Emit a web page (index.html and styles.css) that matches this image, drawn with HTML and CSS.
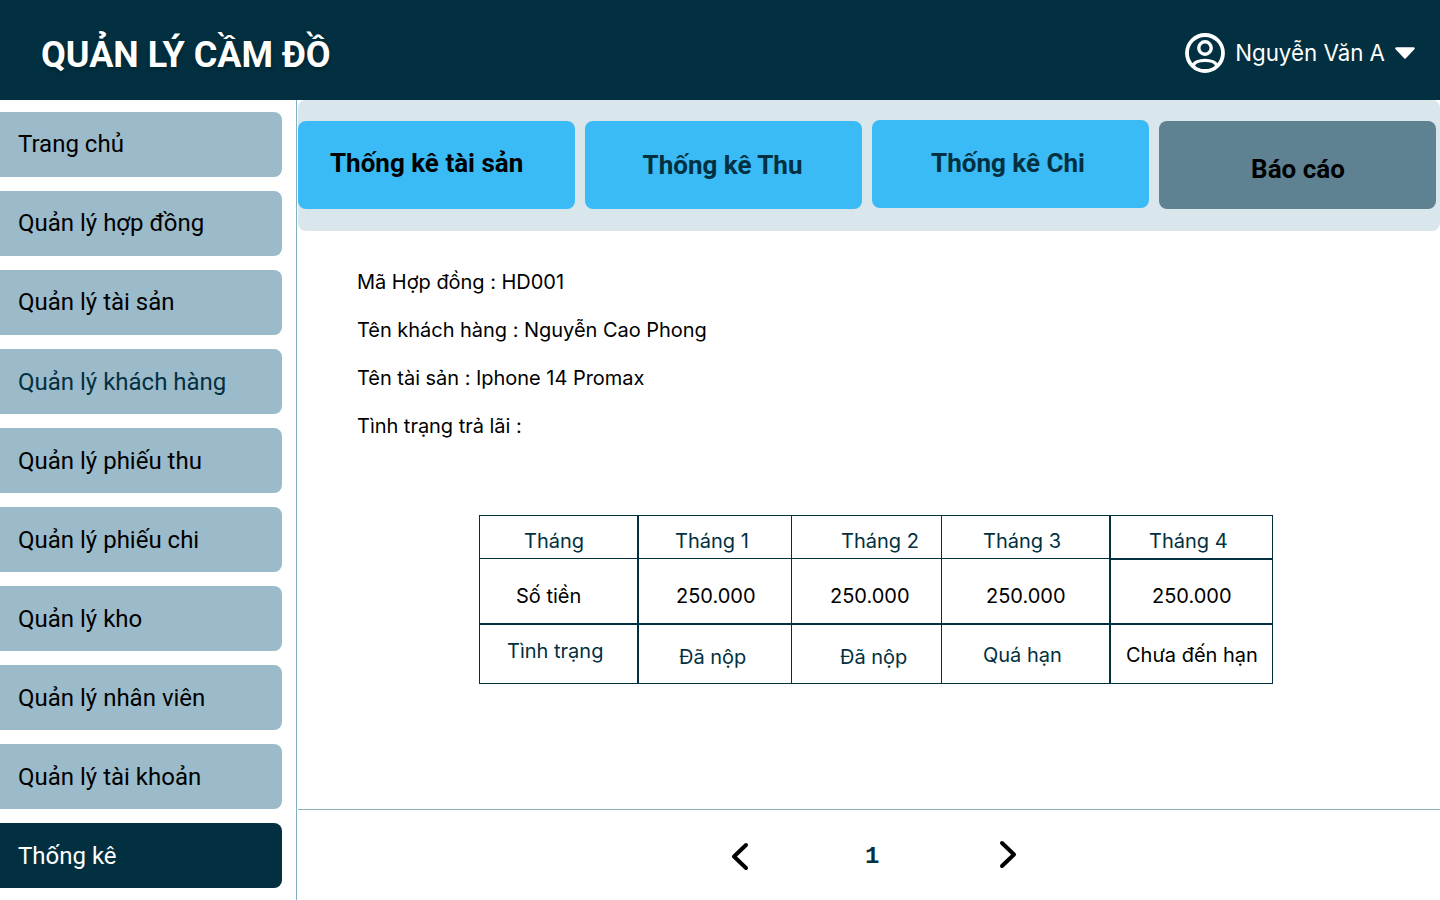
FILE: index.html
```html
<!DOCTYPE html>
<html lang="vi">
<head>
    <meta charset="UTF-8">
    <meta name="viewport" content="width=device-width, initial-scale=1.0">
    <title>Quản lý cầm đồ</title>
    <link rel="stylesheet" href="styles.css">
</head>
<body>

<header class="topbar">
    <h1 class="brand">QUẢN LÝ CẦM ĐỒ</h1>
    <div class="user">
        <svg class="user-icon" width="40" height="40" viewBox="0 0 40 40" fill="none" stroke="#fff">
            <circle cx="20" cy="20" r="18" stroke-width="3.8"/>
            <circle cx="20" cy="15" r="6.2" stroke-width="3.4"/>
            <path d="M8 33C10 25.500 30 25.500 32 33" stroke-width="3.4"/>
        </svg>
        <span class="user-name">Nguyễn Văn A</span>
        <svg class="user-caret" width="20" height="12" viewBox="0 0 20 12">
            <path d="M1.500 1.500H18.500L10 10.500Z" fill="#fff" stroke="#fff" stroke-width="2.500" stroke-linejoin="round"/>
        </svg>
    </div>
</header>

<div class="layout">
    <nav class="sidebar">
        <a class="nav-item nav-up">Trang chủ</a>
        <a class="nav-item nav-up">Quản lý hợp đồng</a>
        <a class="nav-item nav-up">Quản lý tài sản</a>
        <a class="nav-item nav-teal">Quản lý khách hàng</a>
        <a class="nav-item">Quản lý phiếu thu</a>
        <a class="nav-item">Quản lý phiếu chi</a>
        <a class="nav-item">Quản lý kho</a>
        <a class="nav-item">Quản lý nhân viên</a>
        <a class="nav-item">Quản lý tài khoản</a>
        <a class="nav-item nav-active">Thống kê</a>
    </nav>

    <main class="content">
        <div class="tabs">
            <button class="tab tab-assets">Thống kê tài sản</button>
            <button class="tab tab-income">Thống kê Thu</button>
            <button class="tab tab-spend">Thống kê Chi</button>
            <button class="tab tab-report">Báo cáo</button>
        </div>

        <section class="details">
            <p>Mã Hợp đồng : HD001</p>
            <p>Tên khách hàng : Nguyễn Cao Phong</p>
            <p>Tên tài sản : Iphone 14 Promax</p>
            <p>Tình trạng trả lãi :</p>
        </section>

        <table class="report">
            <colgroup>
                <col class="col-a"><col class="col-b"><col class="col-c"><col class="col-d"><col class="col-e">
            </colgroup>
            <tr class="row-month">
                <td class="thick-r teal pl44">Tháng</td>
                <td class="teal pl36">Tháng 1</td>
                <td class="teal pl49">Tháng 2</td>
                <td class="thick-r teal pl41">Tháng 3</td>
                <td class="teal pl38">Tháng 4</td>
            </tr>
            <tr class="row-money">
                <td class="thick-r thick-b pl36">Số tiền</td>
                <td class="thick-b pl37">250.000</td>
                <td class="thick-b pl38">250.000</td>
                <td class="thick-r thick-b pl44">250.000</td>
                <td class="thick-b thick-t pl41">250.000</td>
            </tr>
            <tr class="row-status">
                <td class="thick-r teal pl27 pt14">Tình trạng</td>
                <td class="teal pl40 pt20">Đã nộp</td>
                <td class="teal pl48 pt20">Đã nộp</td>
                <td class="thick-r teal pl41 pt18">Quá hạn</td>
                <td class="pl15 pt18">Chưa đến hạn</td>
            </tr>
        </table>

        <footer class="pager">
            <svg class="pager-prev" width="20" height="30" viewBox="0 0 20 30" fill="none" stroke="#000" stroke-width="4" stroke-linecap="round" stroke-linejoin="round">
                <path d="M16 3L4 14.500L16 26"/>
            </svg>
            <span class="pager-num">1</span>
            <svg class="pager-next" width="20" height="30" viewBox="0 0 20 30" fill="none" stroke="#000" stroke-width="4" stroke-linecap="round" stroke-linejoin="round">
                <path d="M4 3L16 14.500L4 26"/>
            </svg>
        </footer>
    </main>
</div>

</body>
</html>
```

FILE: styles.css
```css
* {
    box-sizing: border-box;
}
body {
    margin: 0;
    height: 900px;
    overflow: hidden;
    background: #fff;
    color: #000;
    font-family: "Inter", "Liberation Sans", sans-serif;
}
.topbar {
    height: 100px;
    padding: 0 25px 0 41px;
    background: #023040;
    display: flex;
    align-items: center;
    justify-content: space-between;
}
.brand {
    margin: 0 0 -10px;
    font-family: "Roboto", sans-serif;
    font-size: 36px;
    font-weight: 700;
    color: #fff;
    text-shadow: 0 2px 4px rgba(0, 0, 0, 0.3);
}
.user {
    margin-top: 6px;
    display: flex;
    align-items: center;
    color: #fff;
    font-size: 22.3px;
}
.user-name {
    margin: -2px 10px 0;
}
.layout {
    display: flex;
    height: 800px;
}
.sidebar {
    width: 297px;
    flex: none;
    padding: 12px 14px 0 0;
    border-right: 1px solid #7fb0c4;
    display: flex;
    flex-direction: column;
    gap: 14px;
}
.nav-item {
    height: 65px;
    flex: none;
    padding-left: 18px;
    background: #9bbbcb;
    border-radius: 0 8px 8px 0;
    display: flex;
    align-items: center;
    font-family: "Roboto", sans-serif;
    font-size: 24px;
    color: #000;
}
.nav-up {
    padding-bottom: 2px;
}
.nav-teal {
    color: #023040;
}
.nav-active {
    background: #023040;
    color: #fff;
}
.content {
    flex: 1;
    min-width: 0;
    margin-left: 1px;
    display: flex;
    flex-direction: column;
}
.tabs {
    height: 131px;
    padding-top: 21px;
    background: #d9e6ec;
    border-radius: 8px;
    display: flex;
    align-items: flex-start;
    gap: 10px;
}
.tab {
    width: 277px;
    height: 88px;
    padding: 0;
    border: none;
    border-radius: 8px;
    background: #3abbf5;
    font-family: "Roboto", sans-serif;
    font-size: 26px;
    font-weight: 700;
    color: #023040;
}
.tab-assets {
    padding: 0 0 4px 32px;
    text-align: left;
    color: #000;
}
.tab-income {
    padding: 0 2px 0 0;
}
.tab-spend {
    margin-top: -1px;
    padding: 0 5px 2px 0;
}
.tab-report {
    padding: 8px 0 0 1px;
    background: #5f8292;
    color: #000;
}
.details {
    padding: 39px 0 0 59px;
    font-size: 20px;
    line-height: 24px;
    letter-spacing: -0.03px;
}
.details p {
    margin: 0 0 24px;
}
.report {
    width: 794px;
    margin: 53px 0 0 181px;
    table-layout: fixed;
    border-collapse: separate;
    border-spacing: 0;
    border-top: 1px solid #023040;
    border-left: 1px solid #023040;
    font-size: 20px;
    line-height: 24px;
}
.col-a { width: 159px; }
.col-b { width: 153px; }
.col-c { width: 150px; }
.col-d { width: 169px; }
.col-e { width: 162px; }
.report td {
    padding-right: 0;
    vertical-align: top;
    white-space: nowrap;
    border-right: 1px solid #023040;
    border-bottom: 1px solid #023040;
}
.row-month td {
    height: 43px;
    padding-top: 13px;
}
.row-money td {
    height: 66px;
    padding-top: 25px;
}
.row-status td {
    height: 59px;
}
.report td.thick-r { border-right-width: 2px; }
.report td.thick-b { border-bottom-width: 2px; }
.report td.thick-t { box-shadow: inset 0 1px 0 #023040; }
.teal { color: #023040; }
.pl15 { padding-left: 15px; }
.pl27 { padding-left: 27px; }
.pl36 { padding-left: 36px; }
.pl37 { padding-left: 37px; }
.pl38 { padding-left: 38px; }
.pl40 { padding-left: 40px; }
.pl41 { padding-left: 41px; }
.pl44 { padding-left: 44px; }
.pl48 { padding-left: 48px; }
.pl49 { padding-left: 49px; }
.pt14 { padding-top: 14px; }
.pt18 { padding-top: 18px; }
.pt20 { padding-top: 20px; }
.pager {
    margin-top: auto;
    height: 91px;
    border-top: 1px solid #8fb0b8;
    padding: 0 0 0 432px;
    display: flex;
    align-items: center;
}
.pager-prev {
    margin-top: 3px;
}
.pager-num {
    margin: 2px 0 0 115px;
    width: 133px;
    font-family: "Liberation Mono", monospace;
    font-size: 24px;
    font-weight: 700;
    color: #023040;
}
.pager-next {
    margin-top: -1px;
}
```
